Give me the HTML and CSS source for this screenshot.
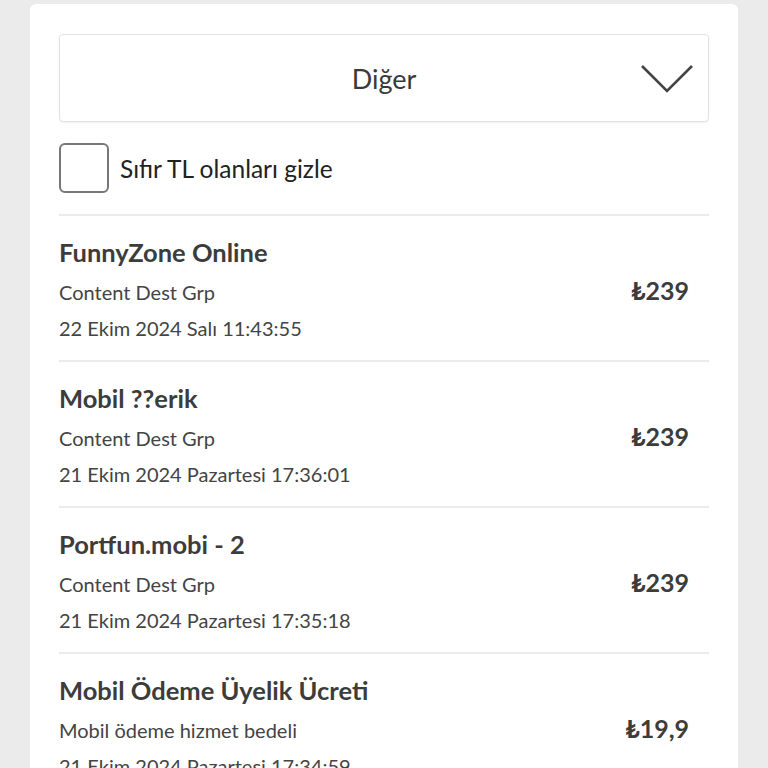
FILE: index.html
```html
<!DOCTYPE html>
<html lang="tr">
<head>
<meta charset="utf-8">
<link rel="stylesheet" href="styles.css">
</head>
<body>
<div class="card">
  <div class="select">
    <span class="select-label">Diğer</span>
    <svg class="chevron" width="54" height="30" viewBox="0 0 54 30"><polyline points="2,2 27,27 52,2" fill="none" stroke="#444" stroke-width="2.6"/></svg>
  </div>
  <label class="check-row">
    <span class="checkbox"></span>
    <span class="check-label">Sıfır TL olanları gizle</span>
  </label>
  <div class="list">
    <div class="item">
      <div class="info">
        <div class="title">FunnyZone Online</div>
        <div class="sub">Content Dest Grp</div>
        <div class="sub">22 Ekim 2024 Salı 11:43:55</div>
      </div>
      <div class="price">₺239</div>
    </div>
    <div class="item">
      <div class="info">
        <div class="title">Mobil ??erik</div>
        <div class="sub">Content Dest Grp</div>
        <div class="sub">21 Ekim 2024 Pazartesi 17:36:01</div>
      </div>
      <div class="price">₺239</div>
    </div>
    <div class="item">
      <div class="info">
        <div class="title">Portfun.mobi - 2</div>
        <div class="sub">Content Dest Grp</div>
        <div class="sub">21 Ekim 2024 Pazartesi 17:35:18</div>
      </div>
      <div class="price">₺239</div>
    </div>
    <div class="item">
      <div class="info">
        <div class="title">Mobil Ödeme Üyelik Ücreti</div>
        <div class="sub">Mobil ödeme hizmet bedeli</div>
        <div class="sub">21 Ekim 2024 Pazartesi 17:34:59</div>
      </div>
      <div class="price">₺19,9</div>
    </div>
  </div>
</div>
</body>
</html>
```
FILE: styles.css
```css
html, body {
  margin: 0;
  padding: 0;
  background: #ebebeb;
  height: 768px;
  overflow: hidden;
}
body {
  font-family: Lato, "Open Sans", sans-serif;
  color: #3c3c3c;
}
.card {
  margin: 4px 0 0 30px;
  width: 708px;
  background: #fff;
  border-radius: 6px;
  padding: 30px 29px 0;
  box-sizing: border-box;
  min-height: 800px;
}
.select {
  height: 88px;
  border: 1px solid #e2e2e2;
  border-radius: 4px;
  box-shadow: 0 1px 2px rgba(0,0,0,0.06);
  display: flex;
  align-items: center;
  justify-content: center;
  position: relative;
  box-sizing: border-box;
}
.select-label {
  font-size: 27px;
  color: #3a3a3a;
}
.chevron {
  position: absolute;
  right: 14px;
  top: 29px;
}
.check-row {
  display: flex;
  align-items: center;
  margin-top: 21px;
  height: 50px;
}
.checkbox {
  width: 50px;
  height: 50px;
  box-sizing: border-box;
  border: 2px solid #777;
  border-radius: 6px;
}
.check-label {
  font-size: 24.5px;
  margin-left: 11px;
  color: #222;
}
.list {
  margin-top: 21px;
}
.item {
  border-top: 2px solid #ececec;
  padding: 20px 20px 14px 0;
  display: flex;
  align-items: center;
  justify-content: space-between;
}
.title {
  font-size: 25.5px;
  font-weight: 700;
  line-height: 32px;
  margin-bottom: 6px;
}
.sub {
  font-size: 20px;
  line-height: 36px;
  color: #444;
}
.price {
  font-size: 25px;
  font-weight: 700;
  color: #3c3c3c;
  margin-bottom: 3px;
}
```
